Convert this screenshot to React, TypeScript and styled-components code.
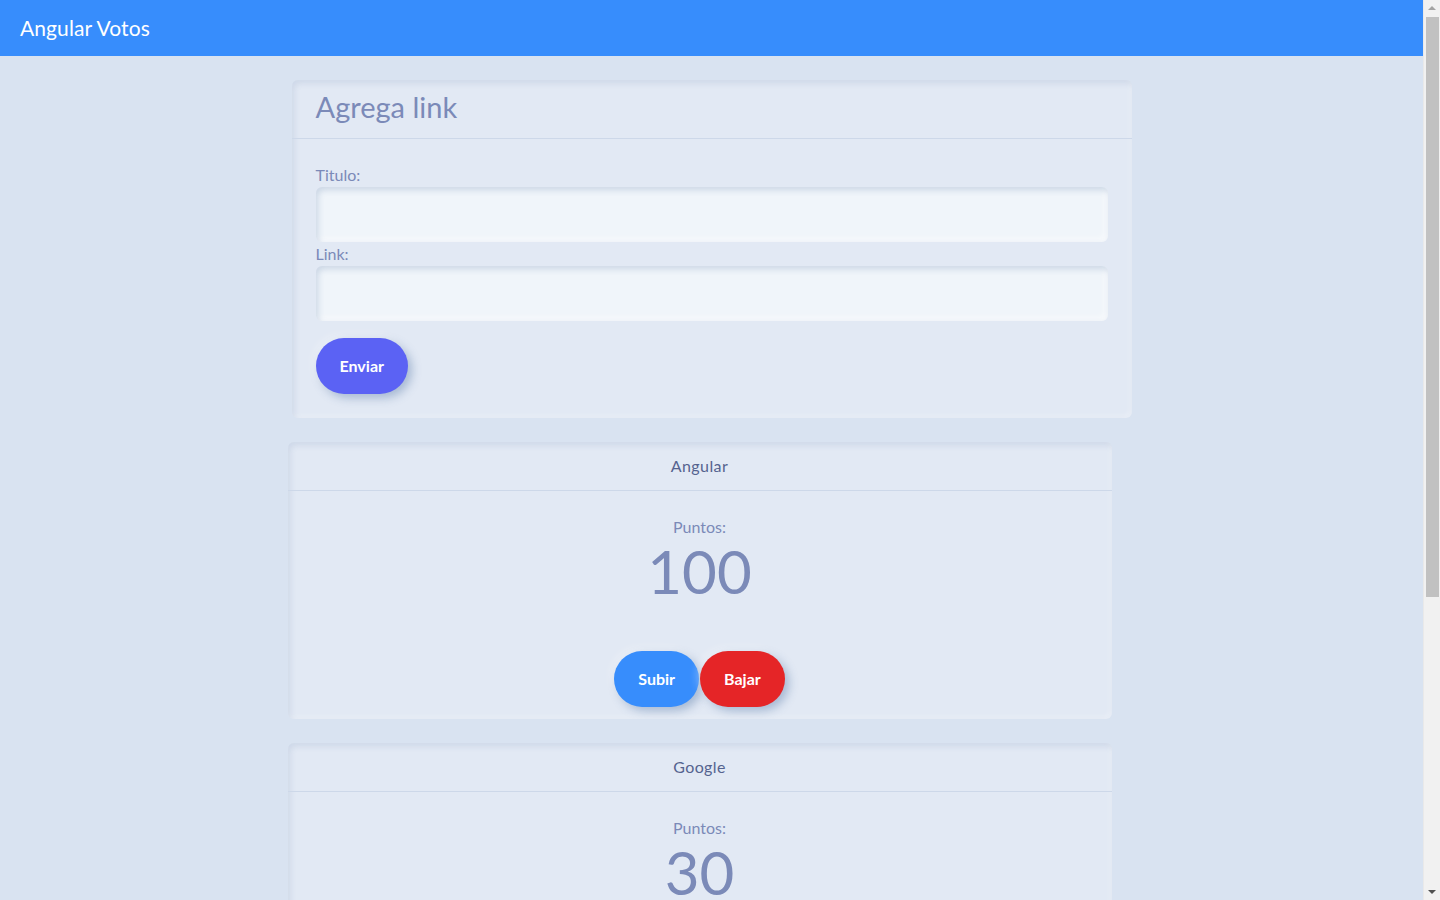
import React from "react";
import styled, { createGlobalStyle } from "styled-components";

const GlobalStyle = createGlobalStyle`
  html, body { margin: 0; padding: 0; }
  body {
    background: #d9e3f1;
    font-family: Lato, "Noto Sans", "DejaVu Sans", sans-serif;
    color: #7b8ab8;
    font-size: 16px;
    line-height: 1.5;
  }
  * { box-sizing: border-box; }
`;

const Page = styled.div`
  margin-right: 17px;
`;

const Navbar = styled.nav`
  height: 56px;
  background: #378dfc;
  display: flex;
  align-items: center;
  padding: 0 20px;
`;

const Brand = styled.a`
  color: #ffffff;
  font-size: 21px;
  line-height: 30px;
  letter-spacing: 0.1px;
  text-decoration: none;
`;

const Main = styled.main`
  width: 856px;
  margin: 0 auto;
  min-height: 1294px;
  padding: 24px 0;
  display: flex;
  flex-direction: column;
  gap: 24px;
`;

const Card = styled.section<{ $narrow?: boolean }>`
  background: #e2e9f4;
  border-radius: 6px;
  margin: ${(p) => (p.$narrow ? "0 0 0 4px" : "0 8px")};
  width: ${(p) => (p.$narrow ? "824px" : "auto")};
  box-shadow: inset 2px 3px 6px rgba(55, 94, 148, 0.12),
    inset -2px -2px 5px rgba(255, 255, 255, 0.35);
  overflow: hidden;
`;

const CardHeader = styled.header<{ $center?: boolean }>`
  padding: 12px 24px;
  border-bottom: 1px solid #cdd8e9;
  text-align: ${(p) => (p.$center ? "center" : "left")};
  color: #55638f;
  letter-spacing: ${(p) => (p.$center ? "0.4px" : "0")};
`;

const Title = styled.h3`
  margin: 0;
  font-size: 29px;
  font-weight: 400;
  line-height: 34px;
  color: #7b8ab8;
  transform: translateY(-2px);
`;

const FormBody = styled.form`
  padding: 24px;
  display: flex;
  flex-direction: column;
  align-items: flex-start;
`;

const Label = styled.label`
  display: block;
  line-height: 24px;
  color: #7b8ab8;
`;

const Input = styled.input`
  width: 100%;
  height: 55px;
  border: none;
  outline: none;
  border-radius: 6px;
  background: #f0f5fa;
  padding: 0 24px;
  font: inherit;
  color: #7b8ab8;
  box-shadow: inset 2px 3px 6px rgba(55, 94, 148, 0.2),
    inset -3px -3px 6px rgba(255, 255, 255, 0.6);
`;

const PillButton = styled.button<{ $bg: string }>`
  border: none;
  border-radius: 999px;
  background: ${(p) => p.$bg};
  color: #ffffff;
  font-family: inherit;
  font-weight: 700;
  font-size: 16px;
  line-height: 24px;
  padding: 16px 24px;
  cursor: pointer;
  box-shadow: 4px 4px 10px rgba(55, 94, 148, 0.35),
    -3px -3px 8px rgba(255, 255, 255, 0.35);
`;

const SubmitButton = styled(PillButton)`
  margin-top: 17.4px;
`;

const VoteBody = styled.div`
  padding: 24px 24px 12px;
  text-align: center;
`;

const PointsLabel = styled.div`
  line-height: 24px;
  color: #7b8ab8;
`;

const Points = styled.div`
  font-size: 60px;
  line-height: 64px;
  color: #7b8ab8;
  margin-bottom: 47.4px;
`;

const ButtonRow = styled.div`
  display: flex;
  justify-content: center;
  gap: 1px;
`;

const Scrollbar = styled.div`
  position: fixed;
  top: 0;
  right: 0;
  width: 17px;
  height: 100vh;
  background: #f1f1f1;
  border-left: 1px solid #e9e9e9;
  display: flex;
  flex-direction: column;
  align-items: center;
`;

const Arrow = styled.div<{ $down?: boolean }>`
  width: 0;
  height: 0;
  border-left: 4px solid transparent;
  border-right: 4px solid transparent;
  ${(p) =>
    p.$down
      ? "border-top: 4px solid #505050; margin-top: auto; margin-bottom: 6px;"
      : "border-bottom: 4px solid #a3a3a3; margin-top: 6px;"}
`;

const Thumb = styled.div`
  margin-top: 7px;
  width: 13px;
  height: 580px;
  background: #c1c1c1;
`;

const links = [
  { title: "Angular", votes: 100 },
  { title: "Google", votes: 30 },
];

export default function App() {
  return (
    <>
      <GlobalStyle />
      <Page>
        <Navbar>
          <Brand href="#">Angular Votos</Brand>
        </Navbar>
        <Main>
          <Card>
            <CardHeader>
              <Title>Agrega link</Title>
            </CardHeader>
            <FormBody onSubmit={(e) => e.preventDefault()}>
              <Label htmlFor="titulo">Titulo:</Label>
              <Input id="titulo" />
              <Label htmlFor="link">Link:</Label>
              <Input id="link" />
              <SubmitButton type="submit" $bg="#5b62f4">
                Enviar
              </SubmitButton>
            </FormBody>
          </Card>
          {links.map((l) => (
            <Card $narrow key={l.title}>
              <CardHeader $center>{l.title}</CardHeader>
              <VoteBody>
                <PointsLabel>Puntos:</PointsLabel>
                <Points>{l.votes}</Points>
                <ButtonRow>
                  <PillButton $bg="#378dfc">Subir</PillButton>
                  <PillButton $bg="#e52527">Bajar</PillButton>
                </ButtonRow>
              </VoteBody>
            </Card>
          ))}
        </Main>
      </Page>
      <Scrollbar aria-hidden>
        <Arrow />
        <Thumb />
        <Arrow $down />
      </Scrollbar>
    </>
  );
}
